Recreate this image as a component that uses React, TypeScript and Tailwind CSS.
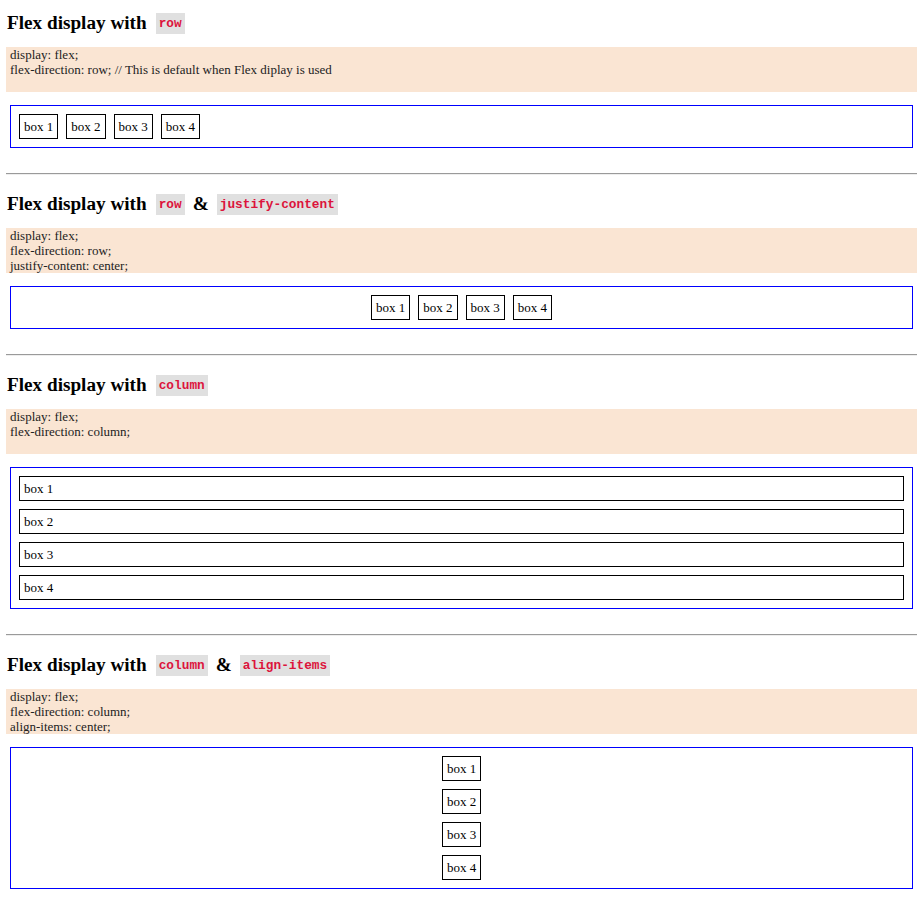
const serif = "font-['Liberation_Serif','Times_New_Roman',serif]";

type Section = {
  title: string[];
  css: string[];
  direction: "row" | "column";
  center?: boolean;
};

const sections: Section[] = [
  {
    title: ["row"],
    css: ["display: flex;", "flex-direction: row; // This is default when Flex diplay is used"],
    direction: "row",
  },
  {
    title: ["row", "justify-content"],
    css: ["display: flex;", "flex-direction: row;", "justify-content: center;"],
    direction: "row",
    center: true,
  },
  {
    title: ["column"],
    css: ["display: flex;", "flex-direction: column;"],
    direction: "column",
  },
  {
    title: ["column", "align-items"],
    css: ["display: flex;", "flex-direction: column;", "align-items: center;"],
    direction: "column",
    center: true,
  },
];

function Code({ children }: { children: string }) {
  return (
    <code className="inline-block bg-[#e0e0e0] px-[3px] py-[3px] font-['Liberation_Mono','Courier_New',monospace] text-[12.8px] font-bold leading-[15px] text-[#dc143c]">
      {children}
    </code>
  );
}

function Box({ label }: { label: string }) {
  return (
    <div className="border border-black px-[4px] py-[4px] text-[13px] leading-[15px] text-black">
      {label}
    </div>
  );
}

function Demo({ section, first }: { section: Section; first: boolean }) {
  const boxes = ["box 1", "box 2", "box 3", "box 4"];
  let layout = "flex flex-row gap-2";
  if (section.direction === "row" && section.center) layout = "flex flex-row justify-center gap-2";
  if (section.direction === "column") layout = "flex flex-col gap-2";
  if (section.direction === "column" && section.center) layout = "flex flex-col items-center gap-2";

  return (
    <section>
      {!first && <hr className="mt-[25px] border-t border-b border-t-[#9a9a9a] border-b-[#eeeeee]" />}
      <h2
        className={`${first ? "mt-[9px]" : "mt-[15px]"} ml-px flex h-[28px] items-center gap-2 text-[19.2px] font-bold leading-[28px] text-black`}
      >
        <span className="mr-px">Flex display with</span>
        {section.title.map((t, i) => (
          <span key={t} className="flex items-center gap-2">
            {i > 0 && <span>&amp;</span>}
            <Code>{t}</Code>
          </span>
        ))}
      </h2>
      <pre
        className={`${serif} mt-[10px] h-[45px] bg-[#fae5d3] pl-[4px] text-[13px] leading-[15px] text-[#222]`}
      >
        {section.css.join("\n")}
      </pre>
      <div className={`mx-[4px] mt-[13px] border border-[#0000ff] p-[8px] ${layout}`}>
        {boxes.map((b) => (
          <Box key={b} label={b} />
        ))}
      </div>
    </section>
  );
}

export default function App() {
  return (
    <div className={`${serif} min-h-[922px] w-[917px] bg-white pl-[6px] pb-[30px]`}>
      {sections.map((s, i) => (
        <Demo key={i} section={s} first={i === 0} />
      ))}
    </div>
  );
}
